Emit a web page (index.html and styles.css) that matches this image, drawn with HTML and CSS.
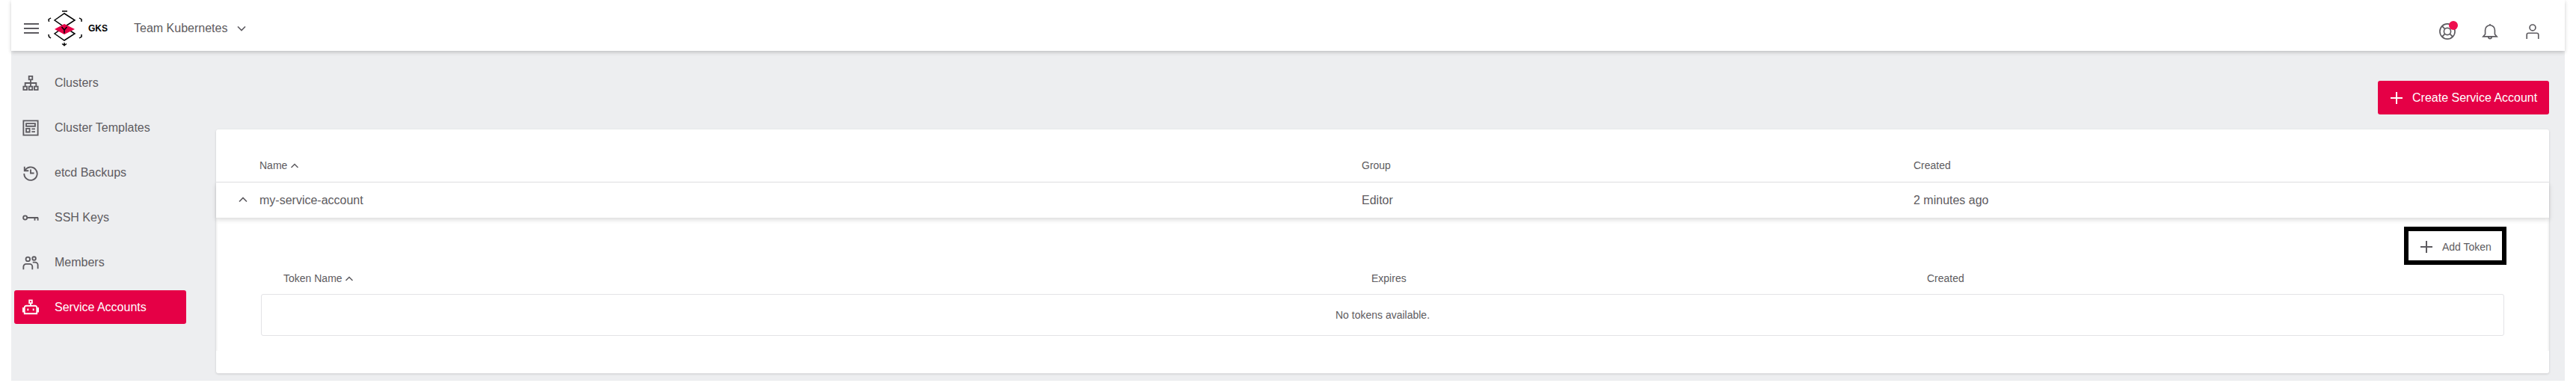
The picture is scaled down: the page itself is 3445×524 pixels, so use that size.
FILE: index.html
```html
<!DOCTYPE html>
<html lang="en">
<head>
    <meta charset="UTF-8">
    <title>Service Accounts - GKS</title>
    <link rel="stylesheet" href="styles.css">
</head>
<body>
    <div class="page">
        <header class="topbar">
            <svg class="menu-icon" viewBox="0 0 20 14"><path d="M0 1h20M0 7h20M0 13h20"/></svg>
            <svg class="logo" viewBox="0 0 46 48">
                <path class="logo-line" d="M9 31 22 40 36 31 22 22Z"/>
                <path class="logo-line" d="M9 13 22 4 36 13 22 22Z"/>
                <path class="logo-red" d="M9 25 22 18 36 25 22 32Z"/>
                <path class="logo-mark" d="M18.500 22 22 26 25.500 22M22 26v4.500"/>
                <path class="logo-mark" d="M19 1h7M22 43v4.500M19 44.500 22 46.500 25 44.500M4 10 1 12 1.500 15M42 10 45 12 45 15M1 32 1.500 35 4 37M45 32 45 35 42 37"/>
            </svg>
            <span class="brand">GKS</span>
            <span class="team">Team Kubernetes</span>
            <svg class="chevron" viewBox="0 0 12 8"><path d="M1 1.500 6 6.500 11 1.500"/></svg>
            <div class="top-actions">
                <span class="help">
                    <svg class="top-icon" viewBox="0 0 24 24"><circle cx="12" cy="12" r="11"/><circle cx="12" cy="12" r="5"/><path d="M4 4l4.500 4.500M20 20l-4.500-4.500M4 20l4.500-4.500"/></svg>
                    <span class="dot"></span>
                </span>
                <svg class="top-icon" viewBox="0 0 24 24"><path d="M2 19.500h20l-3-3.500v-6a7 7 0 0 0-14 0v6ZM12 1v2M9.500 20a2.500 2.500 0 0 0 5 0"/></svg>
                <svg class="top-icon" viewBox="0 0 24 24"><circle cx="12" cy="6.500" r="4.300"/><path d="M3.500 23v-6a2.500 2.500 0 0 1 2.500-2.500h12a2.500 2.500 0 0 1 2.500 2.500v6"/></svg>
            </div>
        </header>

        <div class="shell">
            <nav class="sidebar">
                <a class="nav-item">
                    <svg class="nav-icon" viewBox="0 0 24 24"><path d="M9.500 2h5v5h-5ZM1.500 17h5v5h-5ZM9.500 17h5v5h-5ZM17.500 17h5v5h-5ZM12 7v10M4 17v-5h16v5"/></svg>
                    Clusters
                </a>
                <a class="nav-item">
                    <svg class="nav-icon" viewBox="0 0 24 24"><path d="M1.500 1.500h21v21h-21ZM5.500 5.500h13v4h-13ZM5.500 13h5v5h-5ZM13.500 13.500h5M13.500 17.500h5"/></svg>
                    Cluster Templates
                </a>
                <a class="nav-item">
                    <svg class="nav-icon" viewBox="0 0 24 24"><path d="M3 3v6h6M3.500 9A9.500 9.500 0 1 1 2.500 13M12 7v5.500h5"/></svg>
                    etcd Backups
                </a>
                <a class="nav-item">
                    <svg class="nav-icon" viewBox="0 0 24 24"><circle cx="4" cy="12" r="2.800"/><path d="M7 12h16M18 12v4M22.500 12v4"/></svg>
                    SSH Keys
                </a>
                <a class="nav-item">
                    <svg class="nav-icon" viewBox="0 0 24 24"><circle cx="8" cy="7" r="3"/><circle cx="17" cy="6" r="2.500"/><path d="M1.500 22v-4a4 4 0 0 1 4-4h5a4 4 0 0 1 4 4v4M15 11.500h3.500a4 4 0 0 1 4 4V21"/></svg>
                    Members
                </a>
                <a class="nav-item active">
                    <svg class="nav-icon" viewBox="0 0 24 24"><path d="M10 1.500h4v4h-4ZM12 5.500v4M3 12a2.500 2.500 0 0 1 2.500-2.500h13A2.500 2.500 0 0 1 21 12v9H3ZM3 13H1v5h2M21 13h2v5h-2M8 13.500v3M16 13.500v3"/></svg>
                    Service Accounts
                </a>
            </nav>

            <main class="content">
                <div class="toolbar">
                    <button class="btn-primary">
                        <svg class="plus" viewBox="0 0 16 16"><path d="M8 0v16M0 8h16"/></svg>
                        Create Service Account
                    </button>
                </div>

                <section class="card">
                    <div class="cols head-row">
                        <span>Name <svg class="sort" viewBox="0 0 12 8"><path d="M1.500 6 6 1.500 10.500 6"/></svg></span>
                        <span>Group</span>
                        <span>Created</span>
                    </div>
                    <div class="cols data-row">
                        <svg class="row-toggle" viewBox="0 0 12 8"><path d="M1 6.500 6 1.500 11 6.500"/></svg>
                        <span>my-service-account</span>
                        <span>Editor</span>
                        <span>2 minutes ago</span>
                    </div>

                    <div class="details">
                        <div class="details-actions">
                            <button class="btn-add">
                                <svg class="plus" viewBox="0 0 16 16"><path d="M8 0v16M0 8h16"/></svg>
                                Add Token
                            </button>
                        </div>
                        <div class="token-cols">
                            <span>Token Name <svg class="sort" viewBox="0 0 12 8"><path d="M1.500 6 6 1.500 10.500 6"/></svg></span>
                            <span>Expires</span>
                            <span>Created</span>
                        </div>
                        <div class="empty">No tokens available.</div>
                    </div>
                </section>
            </main>
        </div>
    </div>
</body>
</html>
```

FILE: styles.css
```css
body {
    margin: 0;
    background: white;
    font-family: "Liberation Sans", Arial, sans-serif;
    font-size: 16px;
    color: #5d5b60;
}
svg {
    fill: none;
    stroke: currentColor;
    flex: none;
}
.page {
    padding: 0 15px;
}
.topbar {
    position: relative;
    display: flex;
    align-items: center;
    height: 68px;
    box-sizing: border-box;
    padding: 8px 0 0 17px;
    background: white;
    box-shadow: 0 2px 5px rgba(0,0,0,0.2);
}
.menu-icon {
    width: 20px;
    height: 14px;
    stroke-width: 2;
}
.logo {
    width: 46px;
    height: 48px;
    margin-left: 12px;
    color: black;
}
.logo-line {
    stroke-width: 1.5;
}
.logo-red {
    fill: #e50046;
    stroke: none;
}
.logo-mark {
    stroke-width: 1.5;
}
.brand {
    margin-left: 8px;
    font-size: 12px;
    font-weight: bold;
    color: black;
}
.team {
    margin-left: 35px;
}
.chevron {
    width: 12px;
    height: 8px;
    margin-left: 13px;
    stroke-width: 1.6;
}
.top-actions {
    display: flex;
    align-items: center;
    gap: 35px;
    margin-left: auto;
    margin-right: 32px;
    padding-top: 8px;
}
.top-icon {
    display: block;
    width: 22px;
    height: 22px;
    stroke-width: 1.8;
}
.help {
    position: relative;
}
.dot {
    position: absolute;
    top: -3px;
    right: -3px;
    width: 12px;
    height: 12px;
    border-radius: 50%;
    background: #ee0f4f;
}
.shell {
    display: flex;
    height: 441px;
    background: #edeef0;
}
.sidebar {
    width: 274px;
    box-sizing: border-box;
    padding: 20px 0 0 4px;
}
.nav-item {
    display: flex;
    align-items: center;
    gap: 21px;
    width: 230px;
    height: 45px;
    box-sizing: border-box;
    margin-bottom: 15px;
    padding-left: 11px;
    border-radius: 3px;
}
.nav-item.active {
    background: #e50046;
    color: white;
}
.nav-icon {
    width: 22px;
    height: 22px;
    stroke-width: 2;
}
.content {
    flex: 1;
    padding-right: 21px;
}
.toolbar {
    display: flex;
    justify-content: flex-end;
    padding-top: 40px;
    margin-bottom: 20px;
}
.btn-primary {
    display: flex;
    align-items: center;
    gap: 13px;
    width: 229px;
    height: 45px;
    padding: 0 0 0 17px;
    border: none;
    border-radius: 3px;
    background: #e50046;
    color: white;
    font-family: inherit;
    font-size: 16px;
}
.plus {
    width: 16px;
    height: 16px;
    stroke-width: 2;
}
.card {
    height: 326px;
    border-radius: 3px;
    background: white;
    box-shadow: 0 1px 3px rgba(0,0,0,0.15);
}
.cols {
    display: grid;
    grid-template-columns: 1474px 738px 1fr;
    align-items: center;
    padding-left: 58px;
}
.head-row {
    height: 71px;
    box-sizing: border-box;
    padding-bottom: 14px;
    border-bottom: 1px solid #e3e3e6;
    font-size: 14px;
    align-items: end;
}
.sort {
    width: 12px;
    height: 8px;
    stroke-width: 1.5;
}
.data-row {
    position: relative;
    height: 47px;
    box-shadow: 0 3px 6px rgba(0,0,0,0.14);
}
.row-toggle {
    position: absolute;
    left: 30px;
    top: 19px;
    width: 12px;
    height: 8px;
    stroke-width: 1.6;
}
.details {
    height: 178px;
    box-sizing: border-box;
    padding: 12px 60px 0 60px;
    box-shadow: inset 3px 0 3px -2px rgba(0,0,0,0.07), inset -3px 0 3px -2px rgba(0,0,0,0.07);
}
.details-actions {
    display: flex;
    justify-content: flex-end;
    margin-right: -3px;
}
.btn-add {
    display: flex;
    align-items: center;
    gap: 13px;
    width: 137px;
    height: 51px;
    box-sizing: border-box;
    padding: 2px 0 0 16px;
    border: 6px solid black;
    background: white;
    color: #5d5b60;
    font-family: inherit;
    font-size: 14px;
}
.token-cols {
    display: grid;
    grid-template-columns: 1455px 743px 1fr;
    align-items: center;
    height: 39px;
    box-sizing: border-box;
    padding: 0 0 3px 30px;
    font-size: 14px;
}
.empty {
    display: flex;
    align-items: center;
    justify-content: center;
    height: 56px;
    box-sizing: border-box;
    border: 1px solid #e3e3e6;
    border-radius: 3px;
    font-size: 14px;
}
```
